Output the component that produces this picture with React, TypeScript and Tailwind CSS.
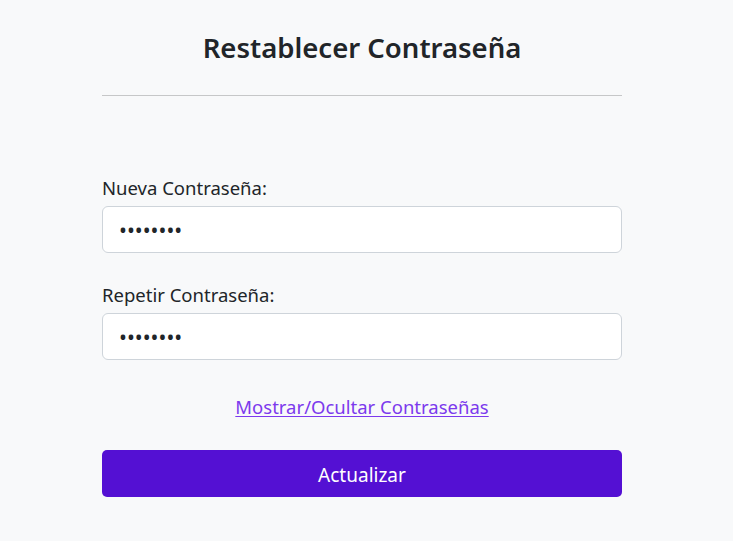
import { useState } from 'react';

export default function App() {
    const [show, setShow] = useState(false);
    const [pass1, setPass1] = useState('12345678');
    const [pass2, setPass2] = useState('12345678');

    return (
        <div className="min-h-[541px] bg-[#f8f9fa] text-[#212529]" style={{ fontFamily: '"Noto Sans", "Open Sans", sans-serif' }}>
            <div className="w-[520px] ml-[102px] pt-[28px]">
                <h2 className="text-center text-[27.5px] font-semibold leading-[40px]">Restablecer Contraseña</h2>
                <hr className="mt-[27px] border-t border-[#c6c7c8]" />

                <form className="mt-[80px]" onSubmit={e => e.preventDefault()}>
                    <label className="block text-[18.5px] leading-[24px] mb-[6px]">Nueva Contraseña:</label>
                    <input
                        type={show ? 'text' : 'password'}
                        value={pass1}
                        onChange={e => setPass1(e.target.value)}
                        className="w-full h-[47px] px-4 text-[21px] bg-white border border-[#ced4da] rounded-[6px] focus:outline-none"
                    />

                    <label className="block text-[18.5px] leading-[24px] mt-[30px] mb-[6px]">Repetir Contraseña:</label>
                    <input
                        type={show ? 'text' : 'password'}
                        value={pass2}
                        onChange={e => setPass2(e.target.value)}
                        className="w-full h-[47px] px-4 text-[21px] bg-white border border-[#ced4da] rounded-[6px] focus:outline-none"
                    />

                    <div className="text-center mt-[33px]">
                        <button type="button" onClick={() => setShow(!show)}
                            className="text-[18.5px] leading-[28px] text-[#7c3aed] underline underline-offset-2 cursor-pointer">
                            Mostrar/Ocultar Contraseñas
                        </button>
                    </div>

                    <button type="submit"
                        className="mt-[29px] w-full h-[47px] pt-[3px] rounded-[5px] bg-[#5410d3] text-white text-[19px] cursor-pointer">
                        Actualizar
                    </button>
                </form>
            </div>
        </div>
    );
}
